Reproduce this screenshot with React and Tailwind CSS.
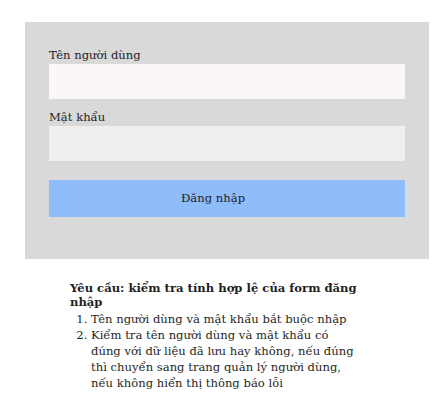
export default function App() {
  return (
    <div className="w-[442px] h-[412px] bg-white text-[#1f1f1f]" style={{ fontFamily: '"DejaVu Serif", "Liberation Serif", serif' }}>
      <div className="pt-[22px] pl-[25px]">
        <div className="w-[404px] h-[237px] bg-[#d9d9d9] px-6 pt-[24px]">
          <label className="block text-[11.6px] leading-[18px]">Tên người dùng</label>
          <div className="h-[35px] bg-[#faf7f6]" />
          <label className="block text-[11.6px] leading-[18px] mt-[9px]">Mật khẩu</label>
          <div className="h-[35px] bg-[#f0efee]" />
          <div className="mt-[19px] h-[37px] bg-[#8fbcfb] flex items-center justify-center pr-[28px] text-[11.6px]">
            Đăng nhập
          </div>
        </div>
      </div>
      <div className="ml-[70px] mt-[22px] w-[290px] text-[11.6px]">
        <p className="font-bold leading-[14px]">Yêu cầu: kiểm tra tính hợp lệ của form đăng nhập</p>
        <ol className="list-decimal pl-[21px] leading-[16px] mt-[2px]">
          <li>Tên người dùng và mật khẩu bắt buộc nhập</li>
          <li>Kiểm tra tên người dùng và mật khẩu có đúng với dữ liệu đã lưu hay không, nếu đúng thì chuyển sang trang quản lý người dùng, nếu không hiển thị thông báo lỗi</li>
        </ol>
      </div>
    </div>
  );
}
